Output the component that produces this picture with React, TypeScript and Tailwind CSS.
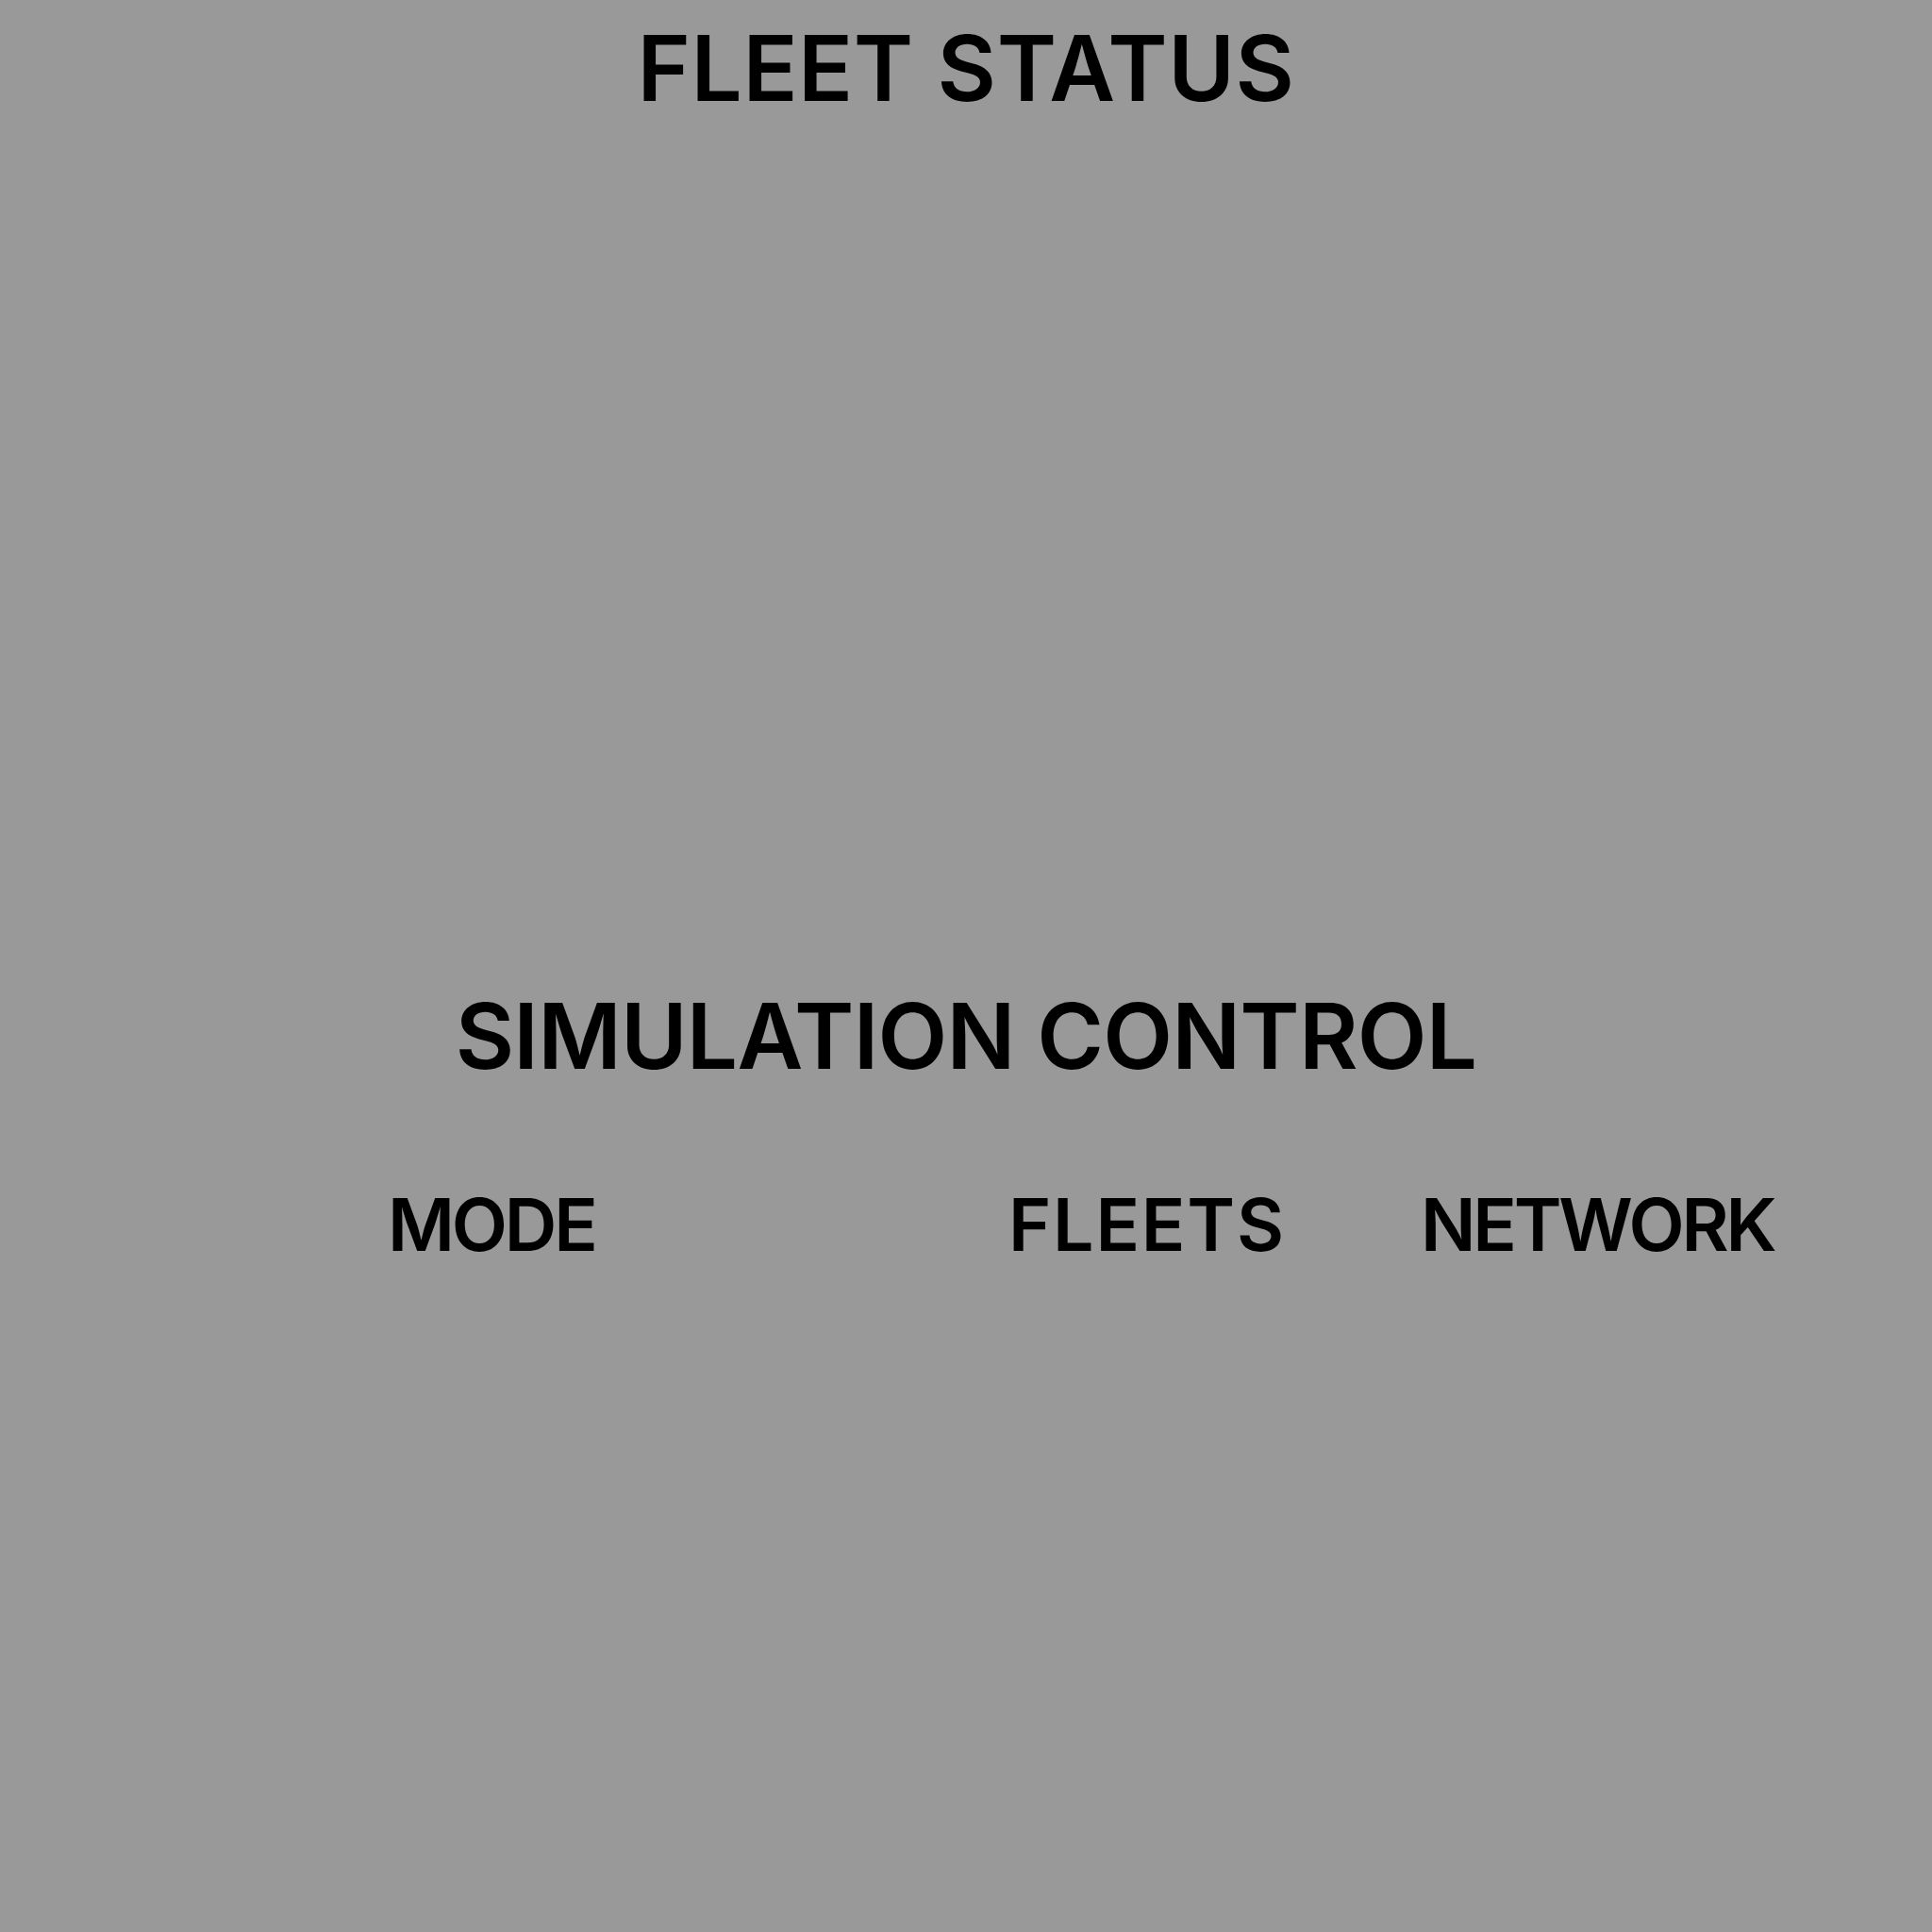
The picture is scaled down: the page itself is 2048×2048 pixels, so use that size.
import React from "react";

export default function App() {
  return (
    <div
      className="min-h-[2048px] w-full bg-[#999999] text-black pt-[24px]"
      style={{ fontFamily: "Inter, 'Noto Sans', sans-serif" }}
    >
      <h2 className="text-center text-[96px] leading-none font-semibold tracking-[0.6px]">
        FLEET STATUS
      </h2>
      <div className="h-[930px]" />
      <h2 className="text-center text-[96px] leading-none font-semibold tracking-[-0.75px]">
        SIMULATION CONTROL
      </h2>
      <div className="mt-[114px] ml-[411px] grid grid-cols-[658px_437px_auto] text-[77px] leading-none font-semibold">
        <div className="tracking-[-3.2px]">MODE</div>
        <div className="tracking-[1.8px]">FLEETS</div>
        <div className="tracking-[-3.2px]">NETWORK</div>
      </div>
    </div>
  );
}
